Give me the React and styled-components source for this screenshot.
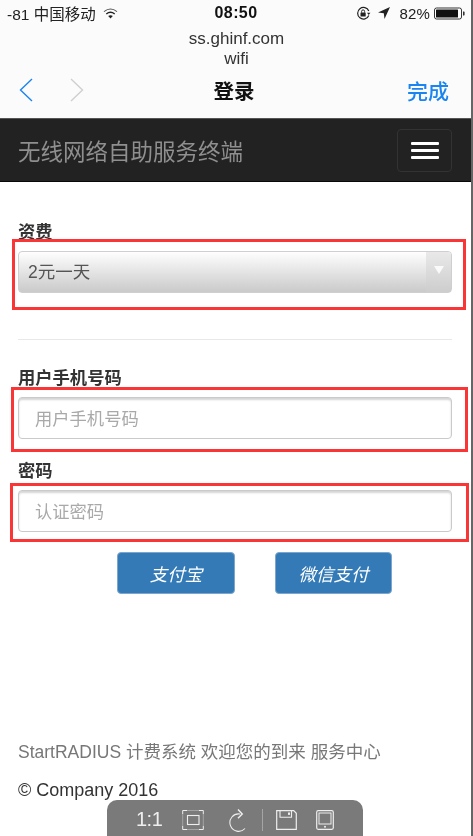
import React from "react";
import styled, { createGlobalStyle } from "styled-components";

const FONT = `"Liberation Sans", "Noto Sans CJK SC", sans-serif`;

const Global = createGlobalStyle`
  html, body { margin: 0; padding: 0; background: #fff; }
  * { box-sizing: border-box; }
`;

const Page = styled.div`
  position: relative;
  width: 473px;
  height: 836px;
  overflow: hidden;
  background: #fff;
  border-right: 2px solid #666;
  filter: blur(0.3px);
  font-family: ${FONT};
  color: #333;
`;

const Browser = styled.header`
  height: 118px;
  background: #fbfbfb;
  display: flex;
  flex-direction: column;
`;

const Status = styled.div`
  height: 26px;
  padding: 0 6px 0 7px;
  display: grid;
  grid-template-columns: 1fr auto 1fr;
  align-items: center;
  font-size: 15.5px;
  color: #222;
`;

const StatusLeft = styled.div`
  display: flex;
  align-items: center;
  gap: 7px;
`;

const Clock = styled.div`
  font-size: 16px;
  font-weight: 700;
  letter-spacing: 0.4px;
  color: #111;
`;

const StatusRight = styled.div`
  display: flex;
  align-items: center;
  justify-content: flex-end;
  gap: 7px;
`;

const Percent = styled.span`
  margin-left: 2px;
  margin-right: -3px;
  font-size: 15px;
  letter-spacing: 0.2px;
`;

const Address = styled.div`
  text-align: center;
  font-size: 17px;
  line-height: 20px;
  color: #333;
  padding: 3px 0 0 2px;
`;

const NavRow = styled.div`
  flex: 1;
  display: grid;
  grid-template-columns: 1fr auto 1fr;
  align-items: center;
  padding: 0 22px 7px 19px;
`;

const Arrows = styled.div`
  display: flex;
  align-items: center;
  gap: 37px;
`;

const PageTitle = styled.div`
  font-size: 20.5px;
  font-weight: 700;
  color: #111;
`;

const Done = styled.div`
  text-align: right;
  font-size: 21px;
  font-weight: 500;
  color: #1a84f0;
`;

const Navbar = styled.nav`
  height: 64px;
  background: #222;
  border-top: 1px solid #555;
  border-bottom: 1px solid #080808;
  display: flex;
  align-items: center;
  justify-content: space-between;
  padding: 0 19px 0 18px;
`;

const Brand = styled.div`
  font-size: 22.5px;
  color: #8f8f8f;
`;

const Toggle = styled.div`
  width: 55px;
  height: 43px;
  border: 1px solid #333;
  border-radius: 4px;
  display: flex;
  flex-direction: column;
  align-items: center;
  justify-content: center;
  gap: 4px;
`;

const ToggleBar = styled.span`
  width: 28px;
  height: 3px;
  border-radius: 1px;
  background: #fff;
`;

const Main = styled.main`
  padding: 37px 19px 0 18px;
`;

const Group = styled.div`
  position: relative;
  margin-bottom: ${(p) => p.$mb || 0}px;
`;

const Label = styled.label`
  display: block;
  height: 26px;
  line-height: 27px;
  font-size: 17.3px;
  font-weight: 700;
  color: #333;
`;

const Select = styled.div`
  width: 434px;
  height: 42px;
  margin-top: 6px;
  border: 1px solid #cfcfcf;
  border-radius: 4px;
  background: linear-gradient(#fefefe, #cacaca);
  display: flex;
  align-items: stretch;
  justify-content: space-between;
`;

const SelectValue = styled.span`
  padding-left: 9px;
  font-size: 17.5px;
  line-height: 41px;
  color: #555;
`;

const SelectArrow = styled.span`
  width: 25px;
  background: linear-gradient(#e9e9e9, #cdcdcd);
  border-radius: 0 3px 3px 0;
  display: flex;
  justify-content: center;
  padding-top: 14px;
  &::before {
    content: "";
    width: 0;
    height: 0;
    border-left: 5px solid transparent;
    border-right: 5px solid transparent;
    border-top: 8px solid #fafafa;
  }
`;

const Divider = styled.hr`
  margin: 46px 0 25px;
  border: 0;
  border-top: 1px solid #e8e8e8;
`;

const TextInput = styled.input`
  display: block;
  width: 434px;
  height: 42px;
  margin-top: 6px;
  padding: 2px 16px 0;
  border: 1px solid #cacaca;
  border-radius: 4px;
  outline: 0;
  background: #fff;
  box-shadow: inset 0 2px 2px rgba(0, 0, 0, 0.17);
  font: 17.3px ${FONT};
  color: #555;
  &::placeholder { color: #a9a9a9; opacity: 1; }
`;

const Redbox = styled.div`
  position: absolute;
  left: ${(p) => p.$l}px;
  top: ${(p) => p.$t}px;
  width: ${(p) => p.$w}px;
  height: ${(p) => p.$h}px;
  border: 3px solid #f93535;
  pointer-events: none;
`;

const Actions = styled.div`
  display: flex;
  gap: 40px;
  margin: 20px 0 0 99px;
`;

const PayButton = styled.button`
  width: ${(p) => p.$w}px;
  height: 42px;
  padding: 0;
  border: 1px solid #7ea6cc;
  border-radius: 4px;
  background: #337ab7;
  color: #fff;
  font: italic 17.5px ${FONT};
`;

const Footer = styled.footer`
  margin-top: 146px;
  padding-left: 18px;
`;

const FooterLine = styled.div`
  font-size: ${(p) => p.$size}px;
  line-height: 24px;
  color: ${(p) => p.$c};
  margin-bottom: ${(p) => p.$mb || 0}px;
`;

const Viewer = styled.div`
  position: absolute;
  left: 107px;
  bottom: 0;
  width: 256px;
  height: 36px;
  background: #7a7a7a;
  border-radius: 10px 10px 0 0;
  box-shadow: 0 0 2px rgba(255, 255, 255, 0.8);
  display: flex;
  align-items: center;
  padding: 3px 0 0 29px;
  color: #eee;
`;

const Ratio = styled.span`
  width: 46px;
  font-size: 20px;
  font-weight: 300;
  letter-spacing: -0.5px;
`;

const ToolIcon = styled.svg`
  display: block;
  flex: none;
  margin-left: ${(p) => p.$ml || 0}px;
`;

const ToolSep = styled.span`
  width: 1px;
  height: 22px;
  margin-left: 15px;
  background: #a5a5a5;
`;

const Wifi = () => (
  <svg width="15" height="11" viewBox="0 0 15 11" fill="none" stroke="#222">
    <path d="M1 3.6C5 .4 10 .4 14 3.6" strokeWidth="1.2" opacity=".75" />
    <path d="M3.3 6C5.8 4 9.2 4 11.7 6" strokeWidth="1.5" />
    <path d="M7.5 10.5 5.2 7.9C6.6 7 8.4 7 9.8 7.9Z" fill="#222" stroke="none" />
  </svg>
);

const RotationLock = () => (
  <svg width="15" height="15" viewBox="0 0 15 15" fill="none" stroke="#222">
    <path d="M12.8 9.5A5.8 5.8 0 1 1 12.8 5" strokeWidth="1.2" />
    <path d="M11 6.8h3.4l-1.7 2.2z" fill="#222" stroke="none" />
    <rect x="4.5" y="6.6" width="5.2" height="4" rx=".5" fill="#222" stroke="none" />
    <path d="M5.6 6.6V5.4a1.5 1.5 0 0 1 3 0v1.2" strokeWidth="1" />
  </svg>
);

const Location = () => (
  <svg width="12" height="12" viewBox="0 0 12 12">
    <path d="M12 0 0 5.6l5.8.6.7 5.8z" fill="#222" />
  </svg>
);

const Battery = () => (
  <svg width="31" height="13" viewBox="0 0 31 13">
    <rect x=".5" y="1" width="27" height="11" rx="2" fill="#fff" stroke="#333" />
    <rect x="2" y="2.5" width="22" height="8" rx=".5" fill="#111" />
    <path d="M29 4.5h.6c.7 0 1 .5 1 1v2c0 .5-.3 1-1 1H29z" fill="#333" />
  </svg>
);

const Chevron = ({ dir, color }) => (
  <svg width="14" height="24" viewBox="0 0 14 24" fill="none" stroke={color} strokeWidth="1.4">
    <path d={dir === "left" ? "M13 1 1.5 12 13 23" : "M1 1 12.5 12 1 23"} />
  </svg>
);

const FitIcon = () => (
  <ToolIcon width="22" height="20" viewBox="0 0 22 20" fill="none" stroke="#eee">
    <path d="M5 .5H.7v3.5M17 .5h4.3V4M5 19.5H.7V16M17 19.5h4.3V16" strokeWidth="1" />
    <path d="M5 .5h12M5 19.5h12M.7 4v12M21.3 4v12" strokeWidth=".8" opacity=".45" />
    <rect x="5.5" y="5.5" width="11.5" height="9" strokeWidth="1.1" />
  </ToolIcon>
);

const RotateIcon = () => (
  <ToolIcon $ml={24} width="19" height="24" viewBox="0 0 19 24" fill="none" stroke="#eee">
    <path d="M17 20.5A8.7 8.7 0 1 1 12 6" strokeWidth="1.1" />
    <path d="M10 1.5 14.2 6 10 10.2" strokeWidth="1.5" />
  </ToolIcon>
);

const SaveIcon = () => (
  <ToolIcon $ml={13} width="21" height="20" viewBox="0 0 21 20" fill="none" stroke="#eee">
    <path d="M.7.7h17l2.6 2.6v16H.7z" strokeWidth="1.2" />
    <path d="M4 .7v6.6h11.5V.7" strokeWidth="1.1" />
    <rect x="12" y="2.5" width="2" height="2.4" fill="#eee" stroke="none" />
  </ToolIcon>
);

const TabletIcon = () => (
  <ToolIcon $ml={19} width="18" height="20" viewBox="0 0 18 20" fill="none" stroke="#eee">
    <rect x=".7" y=".7" width="16.6" height="18.6" rx="1.5" strokeWidth="1.2" />
    <rect x="3" y="3" width="12" height="11" strokeWidth="1" />
    <circle cx="9" cy="16.8" r="1" fill="#eee" stroke="none" />
  </ToolIcon>
);

export default function App() {
  return (
    <Page>
      <Global />
      <Browser>
        <Status>
          <StatusLeft>
            <span>-81 中国移动</span>
            <Wifi />
          </StatusLeft>
          <Clock>08:50</Clock>
          <StatusRight>
            <RotationLock />
            <Location />
            <Percent>82%</Percent>
            <Battery />
          </StatusRight>
        </Status>
        <Address>
          ss.ghinf.com
          <br />
          wifi
        </Address>
        <NavRow>
          <Arrows>
            <Chevron dir="left" color="#1a84f0" />
            <Chevron dir="right" color="#cfcfcf" />
          </Arrows>
          <PageTitle>登录</PageTitle>
          <Done>完成</Done>
        </NavRow>
      </Browser>

      <Navbar>
        <Brand>无线网络自助服务终端</Brand>
        <Toggle>
          <ToggleBar />
          <ToggleBar />
          <ToggleBar />
        </Toggle>
      </Navbar>

      <Main>
        <Group>
          <Label>资费</Label>
          <Select>
            <SelectValue>2元一天</SelectValue>
            <SelectArrow />
          </Select>
          <Redbox $l={-6} $t={20} $w={454} $h={71} />
        </Group>
        <Divider />
        <Group $mb={19}>
          <Label>用户手机号码</Label>
          <TextInput placeholder="用户手机号码" />
          <Redbox $l={-7} $t={22} $w={457} $h={65} />
        </Group>
        <Group>
          <Label>密码</Label>
          <TextInput placeholder="认证密码" />
          <Redbox $l={-8} $t={25} $w={459} $h={59} />
        </Group>
        <Actions>
          <PayButton $w={118}>支付宝</PayButton>
          <PayButton $w={117}>微信支付</PayButton>
        </Actions>
      </Main>

      <Footer>
        <FooterLine $c="#777" $size={17.5} $mb={14}>StartRADIUS 计费系统 欢迎您的到来 服务中心</FooterLine>
        <FooterLine $c="#333" $size={18}>© Company 2016</FooterLine>
      </Footer>

      <Viewer>
        <Ratio>1:1</Ratio>
        <FitIcon />
        <RotateIcon />
        <ToolSep />
        <SaveIcon />
        <TabletIcon />
      </Viewer>
    </Page>
  );
}
